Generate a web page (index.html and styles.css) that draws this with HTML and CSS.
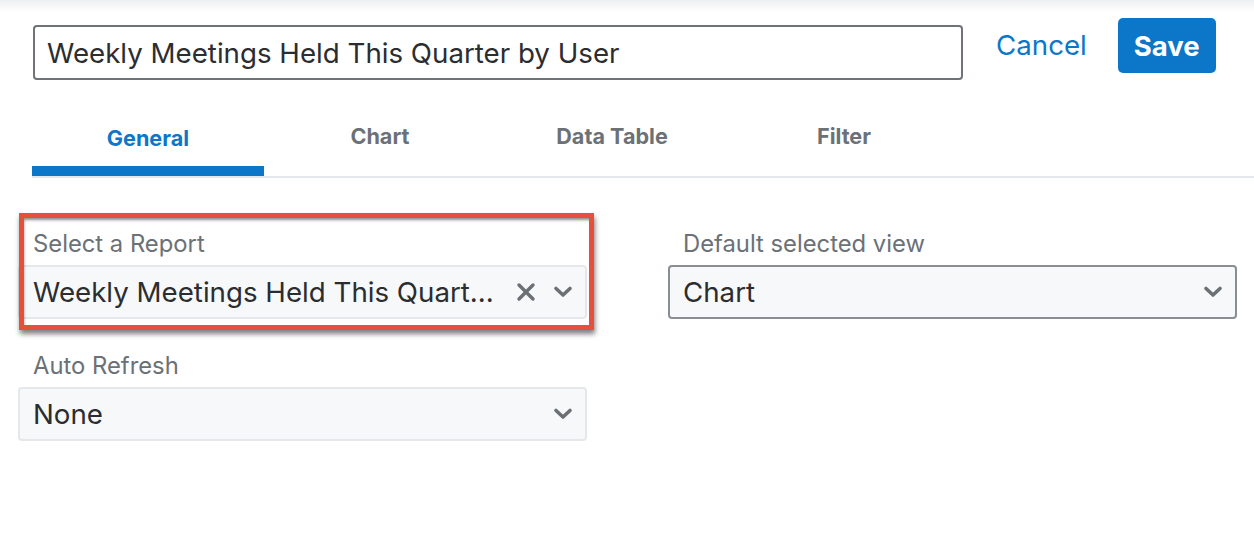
FILE: index.html
```html
<!DOCTYPE html>
<html>
<head>
<meta charset="utf-8">
<link rel="stylesheet" href="styles.css">
</head>
<body>
<div class="page">
  <header class="header">
    <div class="title-input">Weekly Meetings Held This Quarter by User</div>
    <a class="cancel">Cancel</a>
    <button class="save">Save</button>
  </header>
  <nav class="tabs">
    <div class="tab active">General</div>
    <div class="tab">Chart</div>
    <div class="tab">Data Table</div>
    <div class="tab">Filter</div>
  </nav>
  <main class="form">
    <div class="col">
      <div class="field highlighted">
        <div class="label">Select a Report</div>
        <div class="select light">
          <span class="value">Weekly Meetings Held This Quart...</span>
          <svg class="clear" width="22" height="22" viewBox="0 0 22 22"><path d="M4 4 L18 18 M18 4 L4 18" stroke="#6b7075" stroke-width="3.4" stroke-linecap="round"/></svg>
          <svg class="chev" width="20" height="14" viewBox="0 0 20 14"><path d="M3 3.5 L10 10 L17 3.5" fill="none" stroke="#6b7075" stroke-width="3.6" stroke-linecap="round" stroke-linejoin="round"/></svg>
        </div>
        <div class="annotation"></div>
      </div>
      <div class="field">
        <div class="label">Auto Refresh</div>
        <div class="select light">
          <span class="value">None</span>
          <svg class="chev" width="20" height="14" viewBox="0 0 20 14"><path d="M3 3.5 L10 10 L17 3.5" fill="none" stroke="#6b7075" stroke-width="3.6" stroke-linecap="round" stroke-linejoin="round"/></svg>
        </div>
      </div>
    </div>
    <div class="col">
      <div class="field">
        <div class="label">Default selected view</div>
        <div class="select dark">
          <span class="value">Chart</span>
          <svg class="chev" width="20" height="14" viewBox="0 0 20 14"><path d="M3 3.5 L10 10 L17 3.5" fill="none" stroke="#6b7075" stroke-width="3.6" stroke-linecap="round" stroke-linejoin="round"/></svg>
        </div>
      </div>
    </div>
  </main>
</div>
</body>
</html>
```

FILE: styles.css
```css
* { box-sizing: border-box; }
html, body { margin: 0; padding: 0; }
body {
  font-family: Inter, "Noto Sans", "Liberation Sans", sans-serif;
  color: #2b2d30;
  background: linear-gradient(#eeeff0 0px, #ffffff 12px) no-repeat, #fff;
  width: 1254px;
  height: 544px;
  overflow: hidden;
}
.header {
  display: flex;
  align-items: flex-start;
  padding: 18px 0 0 33px;
}
.title-input {
  margin-top: 7px;
  width: 930px;
  height: 55px;
  border: 2px solid #6f7377;
  border-radius: 4px;
  padding: 0 12px;
  display: flex;
  align-items: center;
  font-size: 27.7px;
  color: #2b2d30;
}
.cancel {
  margin-left: 33px;
  height: 56px;
  line-height: 56px;
  font-size: 27.7px;
  color: #0c77c9;
  margin-top: -1px;
}
.save {
  margin-left: 31px;
  width: 98px;
  height: 55px;
  border: none;
  border-radius: 5px;
  background: #0c77c9;
  color: #fff;
  font-family: inherit;
  font-size: 27.5px;
  font-weight: 700;
  padding: 0;
}
.tabs {
  display: flex;
  margin: 39px 0 0 32px;
  border-bottom: 2px solid #e4e8ec;
}
.tab {
  width: 232px;
  text-align: center;
  font-size: 21.6px;
  font-weight: 700;
  color: #6b7176;
  height: 57px;
  line-height: 26px;
  padding-top: 4px;
}
.tab.active {
  color: #0c77c9;
  border-bottom: 10px solid #0c77c9;
  padding-top: 6px;
}
.form {
  display: flex;
  gap: 81px;
  padding: 51px 0 0 18px;
}
.col {
  width: 569px;
  display: flex;
  flex-direction: column;
  gap: 32px;
}
.field {
  position: relative;
  display: flex;
  flex-direction: column;
  gap: 6px;
}
.label {
  padding-left: 15px;
  height: 30px;
  line-height: 30px;
  font-size: 23.8px;
  color: #6b7176;
}
.select {
  height: 54px;
  border-radius: 4px;
  background: #f7f8fa;
  display: flex;
  align-items: center;
  padding: 0 12px 0 13px;
  font-size: 27.7px;
  color: #2b2d30;
}
.select.light { border: 2px solid #e5e8eb; }
.select.dark { border: 2px solid #8a8e92; }
.value { flex: 1; white-space: nowrap; overflow: hidden; }
.clear { margin-right: 16px; }
.annotation {
  position: absolute;
  left: 1px;
  top: -16px;
  width: 575px;
  height: 117px;
  border: 5px solid #e4503a;
  box-shadow: 1px 4px 5px rgba(0,0,0,0.5), inset 1px 3px 3px -1px rgba(0,0,0,0.45);
  pointer-events: none;
}
```
